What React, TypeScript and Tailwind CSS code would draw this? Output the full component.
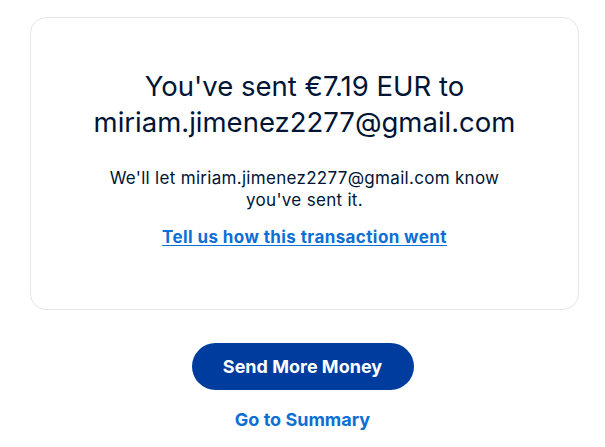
export default function App() {
  return (
    <div className="min-h-[447px] bg-white pt-[17px] font-['Inter','Noto_Sans',sans-serif] text-[#001435]">
      <div className="ml-[30px] w-[549px] rounded-2xl border border-[#e3e6ea] px-6 pt-[50px] pb-[61px] flex flex-col items-center text-center">
        <h1 className="text-[27.5px] leading-[36px] font-normal">
          You've sent €7.19 EUR to
          <br />
          miriam.jimenez2277@gmail.com
        </h1>
        <p className="mt-[27px] max-w-[410px] text-[17px] leading-[22px] tracking-[0.3px]">
          We'll let miriam.jimenez2277@gmail.com know you've sent it.
        </p>
        <a href="#" className="mt-[15px] text-[17px] leading-[22px] font-bold tracking-[0.4px] text-[#0c6fd6] underline underline-offset-2">
          Tell us how this transaction went
        </a>
      </div>
      <div className="mt-[33px] flex flex-col items-center">
        <button className="h-[47px] w-[222px] rounded-full bg-[#003c9e] text-[18px] font-bold text-white">
          Send More Money
        </button>
        <a href="#" className="mt-[19px] text-[18px] font-bold text-[#0c6fd6] leading-[22px]">
          Go to Summary
        </a>
      </div>
    </div>
  );
}
